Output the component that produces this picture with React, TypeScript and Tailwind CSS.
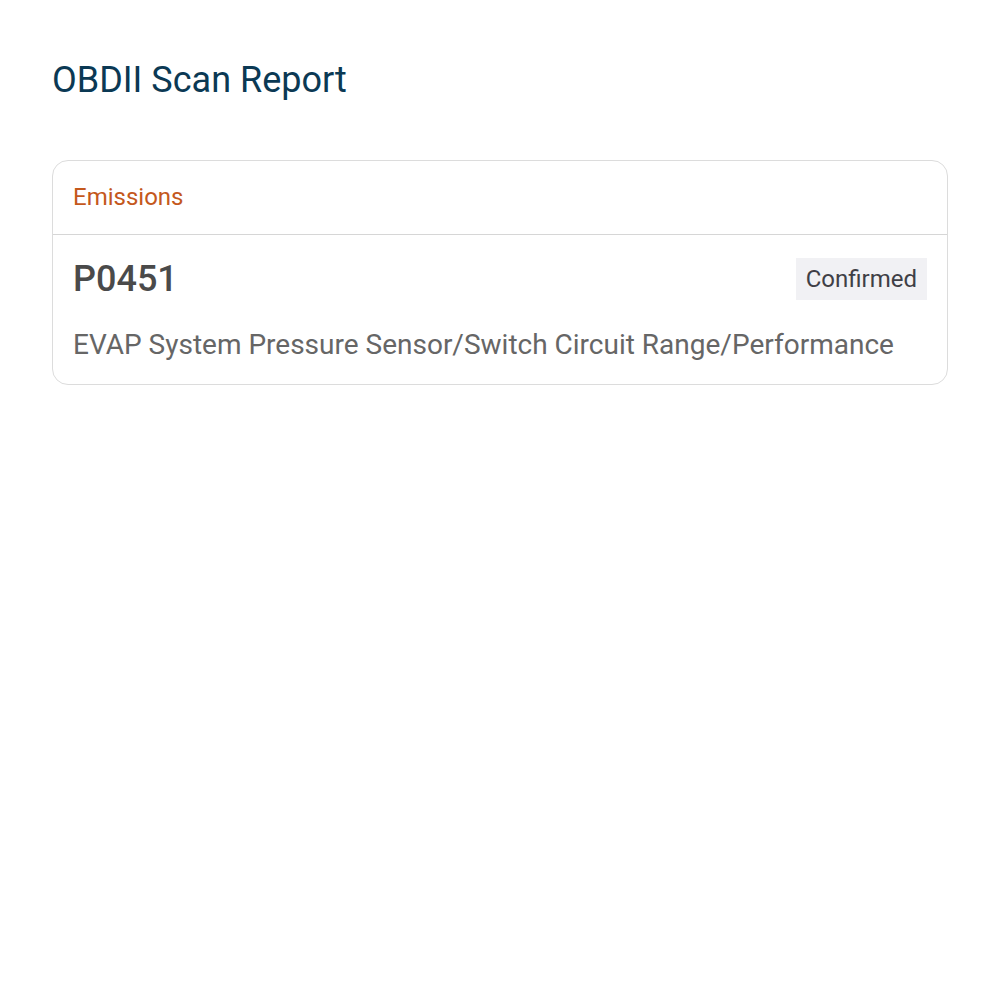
export default function App() {
  return (
    <div className="min-h-screen bg-white px-[52px] pt-[56px] font-['Roboto',sans-serif]">
      <h1 className="text-[36px] leading-[48px] text-[#0b3954] font-normal">OBDII Scan Report</h1>

      <div className="mt-[56px] rounded-[16px] border border-[#dcdcdc] overflow-hidden">
        <div className="h-[74px] flex items-center px-[20px] border-b border-[#d6d6d6]">
          <span className="text-[24px] leading-[30px] pb-[2px] text-[#c4581c]">Emissions</span>
        </div>
        <div className="px-[20px] pt-[23px] pb-[21px]">
          <div className="flex items-center justify-between">
            <span className="text-[36px] leading-[42px] font-medium text-[#4a4a4a]">P0451</span>
            <span className="bg-[#f1f1f4] px-[10px] h-[42px] flex items-center text-[24px] text-[#3f3f46]">Confirmed</span>
          </div>
          <p className="mt-[27px] text-[28px] leading-[36px] text-[#666666]">
            EVAP System Pressure Sensor/Switch Circuit Range/Performance
          </p>
        </div>
      </div>
    </div>
  );
}
